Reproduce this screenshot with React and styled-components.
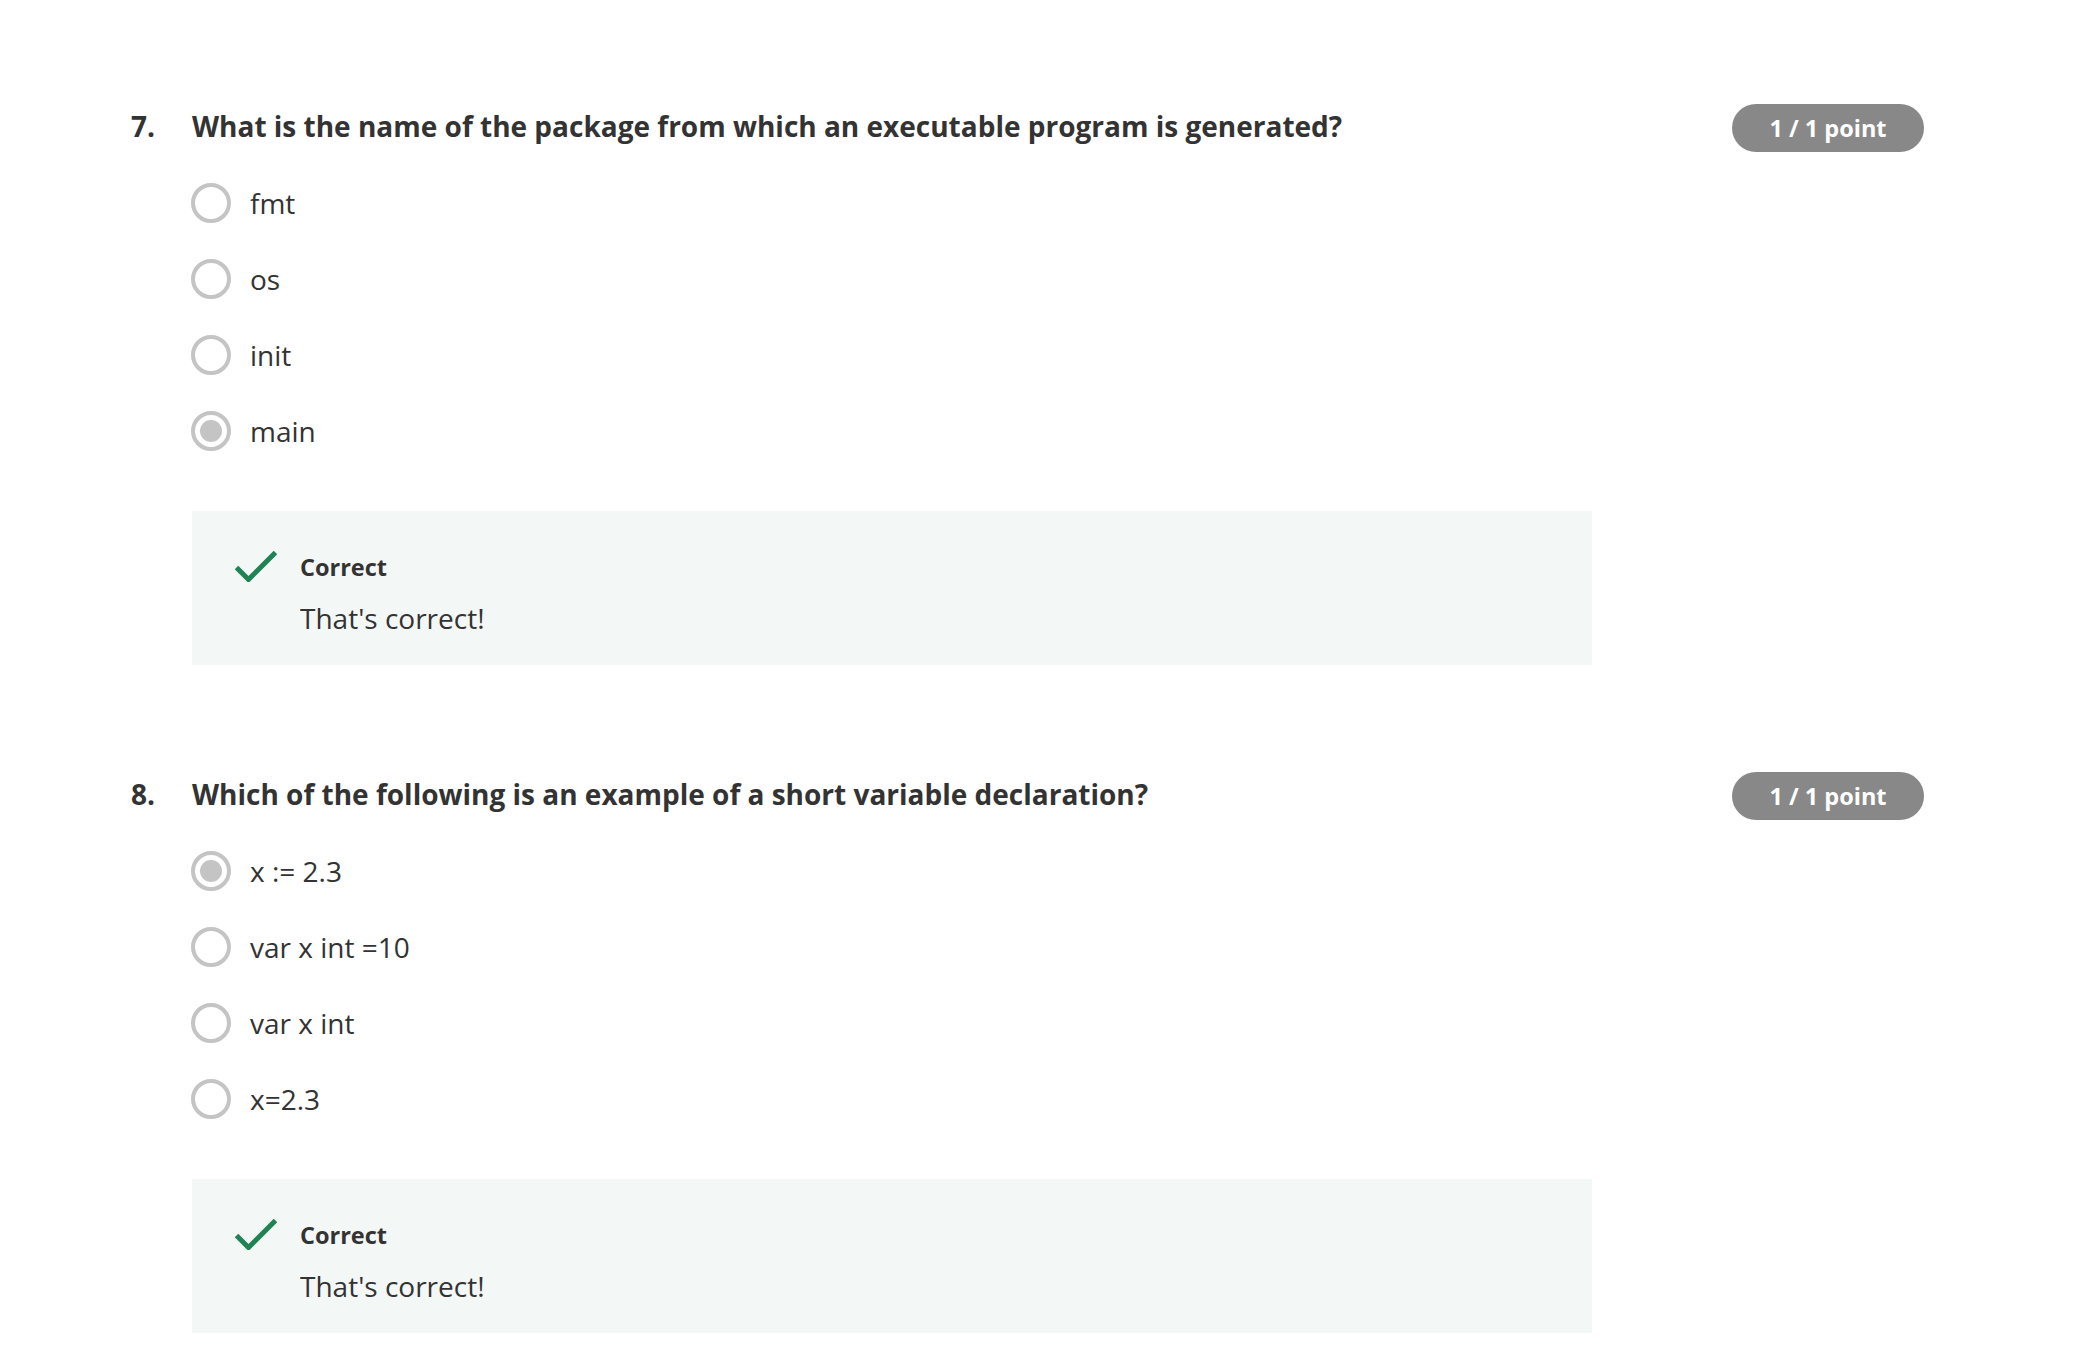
import React from "react";
import styled, { createGlobalStyle } from "styled-components";

const GlobalStyle = createGlobalStyle`
  body {
    margin: 0;
    background: #ffffff;
    font-family: "Open Sans", "Liberation Sans", sans-serif;
    color: #333333;
  }
`;

const Page = styled.div`
  display: flex;
  flex-direction: column;
  gap: 107px;
  padding: 104px 158px 40px 131px;
`;

const Question = styled.section`
  display: grid;
  grid-template-columns: 60px 1401px 1fr;
  align-items: start;
`;

const Number = styled.div`
  font-size: 28px;
  font-weight: 700;
  line-height: 40px;
  margin-top: 2px;
`;

const Body = styled.div`
  display: flex;
  flex-direction: column;
`;

const Title = styled.h2`
  margin: 2px 0 0 1px;
  font-size: 28px;
  font-weight: 700;
  line-height: 40px;
`;

const Badge = styled.div`
  justify-self: end;
  display: flex;
  align-items: center;
  justify-content: center;
  width: 192px;
  height: 48px;
  border-radius: 24px;
  background: #888888;
  color: #ffffff;
  font-size: 23.5px;
  font-weight: 700;
`;

const Options = styled.div`
  display: flex;
  flex-direction: column;
  gap: 36px;
  margin-top: 37px;
`;

const Option = styled.label`
  display: flex;
  align-items: center;
  gap: 19px;
  height: 40px;
  font-size: 28px;
  line-height: 40px;
`;

const Radio = styled.span`
  box-sizing: border-box;
  display: flex;
  align-items: center;
  justify-content: center;
  width: 40px;
  height: 40px;
  border-radius: 50%;
  border: 4px solid #c4c4c4;
  &::after {
    content: "";
    width: 22px;
    height: 22px;
    border-radius: 50%;
    background: ${(p) => (p.$checked ? "#c4c4c4" : "transparent")};
  }
`;

const Feedback = styled.div`
  display: flex;
  margin-top: 60px;
  margin-left: 1px;
  padding: 40px 43px 27px;
  background: #f3f8f6;
`;

const CheckIcon = styled.svg`
  flex: none;
  width: 42px;
  height: 31px;
  margin-right: 23px;
`;

const FeedbackText = styled.div`
  display: flex;
  flex-direction: column;
`;

const FeedbackTitle = styled.div`
  font-size: 23.5px;
  font-weight: 700;
  line-height: 32px;
`;

const FeedbackMessage = styled.div`
  margin-top: 15px;
  font-size: 28px;
  line-height: 40px;
`;

const questions = [
  {
    n: "7.",
    title: "What is the name of the package from which an executable program is generated?",
    options: ["fmt", "os", "init", "main"],
    picked: 3,
  },
  {
    n: "8.",
    title: "Which of the following is an example of a short variable declaration?",
    options: ["x := 2.3", "var x int =10", "var x int", "x=2.3"],
    picked: 0,
  },
];

export default function App() {
  return (
    <>
      <GlobalStyle />
      <Page>
        {questions.map((q) => (
          <Question key={q.n}>
            <Number>{q.n}</Number>
            <Body>
              <Title>{q.title}</Title>
              <Options>
                {q.options.map((o, i) => (
                  <Option key={o}>
                    <Radio $checked={i === q.picked} />
                    {o}
                  </Option>
                ))}
              </Options>
              <Feedback>
                <CheckIcon viewBox="0 0 42 31">
                  <path d="M1.5 16.5 L13.5 28.5 L40.5 1.5" fill="none" stroke="#1f8354" strokeWidth="5" />
                </CheckIcon>
                <FeedbackText>
                  <FeedbackTitle>Correct</FeedbackTitle>
                  <FeedbackMessage>That's correct!</FeedbackMessage>
                </FeedbackText>
              </Feedback>
            </Body>
            <Badge>1 / 1 point</Badge>
          </Question>
        ))}
      </Page>
    </>
  );
}
